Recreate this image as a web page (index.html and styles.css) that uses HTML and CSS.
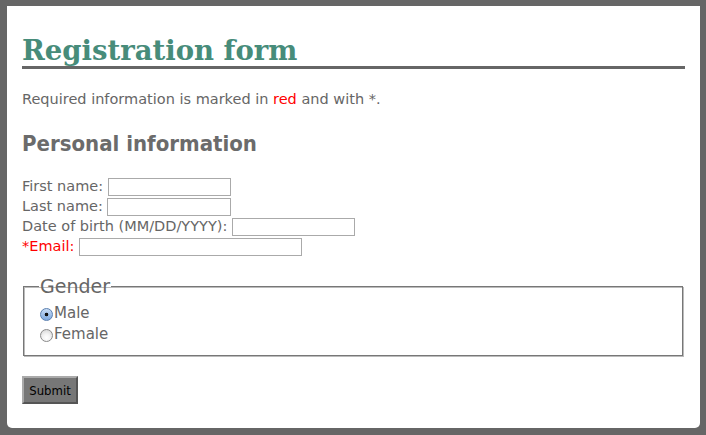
FILE: index.html
```html
<!DOCTYPE html>
<html lang="en">
<head>
<meta charset="utf-8">
<title>Registration form</title>
<link rel="stylesheet" href="styles.css">
</head>
<body>
<div class="page">
  <h1 class="title">Registration form</h1>
  <p class="note">Required information is marked in <span class="req">red</span> and with *.</p>
  <h2 class="section">Personal information</h2>
  <form class="form">
    <div class="row"><label>First name: <input type="text" class="in in-first"></label></div>
    <div class="row"><label>Last name: <input type="text" class="in in-last"></label></div>
    <div class="row"><label>Date of birth (MM/DD/YYYY): <input type="text" class="in in-dob"></label></div>
    <div class="row"><label class="req">*Email: <input type="text" class="in in-email"></label></div>
    <fieldset class="gender">
      <legend>Gender</legend>
      <label class="opt"><input type="radio" name="g" class="radio" checked>Male</label>
      <label class="opt"><input type="radio" name="g" class="radio">Female</label>
    </fieldset>
    <button type="submit" class="submit">Submit</button>
  </form>
</div>
</body>
</html>
```
FILE: styles.css
```css
html, body { height: 100%; }
body {
  margin: 0;
  background: #666;
  padding: 6px 6px 7px 7px;
  box-sizing: border-box;
  font-family: "DejaVu Sans", sans-serif;
  color: #666;
}
.page {
  background: #fff;
  height: 100%;
  box-sizing: border-box;
  padding: 1px 15px 0 15px;
  border-radius: 0 0 5px 5px;
}
.title {
  font-family: "DejaVu Serif", Georgia, serif;
  font-weight: bold;
  font-size: 27.5px;
  color: #478c7a;
  margin: 27px 0 0;
  padding-bottom: 0;
  border-bottom: 3px solid #666;
  line-height: 32px;
}
.note {
  font-size: 14.5px;
  margin: 21px 0 0;
  line-height: 18px;
}
.req { color: #f00; }
.section {
  font-family: "DejaVu Sans Condensed", "DejaVu Sans", sans-serif;
  font-size: 22px;
  font-weight: bold;
  margin: 23px 0 0;
  line-height: 26px;
  color: #6b6b6b;
}
.form { margin-top: 19px; }
.row {
  font-size: 14.5px;
  line-height: 20px;
  height: 20px;
}
.in {
  box-sizing: border-box;
  height: 18px;
  border: 1px solid #aaa;
  padding: 0;
  margin: 0;
  vertical-align: middle;
}
.in-first { width: 123px; }
.in-last { width: 124px; }
.in-dob { width: 123px; }
.in-email { width: 223px; }
.gender {
  margin: 19px 2px 0 1px;
  padding: 6px 16px 10px;
  border: 1px solid #777;
  box-shadow: 1px 1px 0 #bbb, inset 1px 1px 0 #bbb;
  font-size: 15px;
  line-height: 21px;
}
.gender legend {
  font-size: 19px;
  padding: 0 1px;
  margin-left: -1px;
  line-height: 22px;
}
.opt { display: flex; align-items: center; height: 21px; }
.radio {
  appearance: none;
  -webkit-appearance: none;
  margin: 1px 1px 0 0;
  width: 13px;
  height: 13px;
  box-sizing: border-box;
  border-radius: 50%;
  border: 1px solid #8a8a8a;
  background: radial-gradient(circle at 50% 70%, #fff 0, #f2f2f2 40%, #d0d0d0 100%);
}
.radio:checked {
  border-color: #5a7fb0;
  background: radial-gradient(circle, #111 0, #111 1.6px, transparent 2.1px),
              linear-gradient(#c8dcf5, #7ea9e0);
}
.submit {
  margin-top: 20px;
  width: 56px;
  height: 28px;
  background: #777;
  border: 2px solid;
  border-color: #aaa #555 #555 #aaa;
  color: #000;
  font-family: "DejaVu Sans Condensed", "DejaVu Sans", sans-serif;
  font-size: 13px;
  padding: 0;
}
```
